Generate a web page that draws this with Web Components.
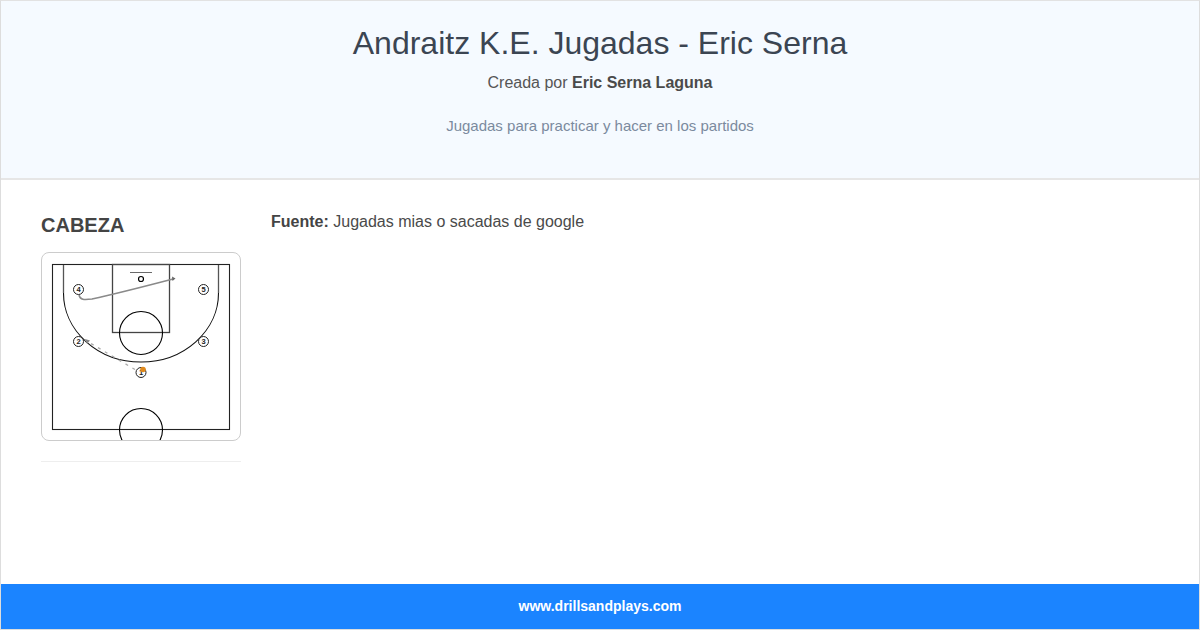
<!DOCTYPE html>
<html lang="es"><head><meta charset="utf-8"><title>Andraitz K.E. Jugadas</title>
<style>
html,body{margin:0;padding:0;background:#fff}
body{font-family:"Liberation Sans",Arial,sans-serif}
</style></head><body>
<playbook-page>
  <playbook-header slot="header" title-text="Andraitz K.E. Jugadas - Eric Serna" author="Eric Serna Laguna" description="Jugadas para practicar y hacer en los partidos"></playbook-header>
  <play-card slot="side" name="CABEZA"></play-card>
  <source-note slot="main" label="Fuente:" text="Jugadas mias o sacadas de google"></source-note>
  <playbook-footer slot="footer" text="www.drillsandplays.com"></playbook-footer>
</playbook-page>
<script>
function def(name, html, init){
  customElements.define(name, class extends HTMLElement{
    connectedCallback(){
      if(this.shadowRoot) return;
      const r=this.attachShadow({mode:"open"});
      r.innerHTML=html;
      if(init) init(r,this);
    }
  });
}
def("playbook-page",`<style>
:host{display:flex;flex-direction:column;box-sizing:border-box;width:1200px;height:630px;border:1px solid #ddd;border-top-color:#e2e2e2;overflow:hidden;background:#fff}
.body{flex:1;display:flex;gap:30px;padding:30px 40px 0;min-height:0}
.side{width:200px;flex:none}.main{flex:1;min-width:0}
</style>
<slot name="header"></slot>
<div class="body"><div class="side"><slot name="side"></slot></div><div class="main"><slot name="main"></slot></div></div>
<slot name="footer"></slot>`);
def("playbook-header",`<style>
:host{display:block;box-sizing:border-box;height:179px;background:#f5faff;border-bottom:2px solid #e6e6e6;text-align:center;padding-top:24px}
h1{margin:0;font:400 32px/37px "Liberation Sans",Arial,sans-serif;color:#3b4552}
.by{margin:9px 0 0;font-size:16px;line-height:24px;color:#555}
.by b{font-weight:700;color:#4a4a4a}
.d{margin:21px 0 0;font-size:15px;line-height:20px;color:#7b8a9e}
</style><h1></h1><p class="by">Creada por <b></b></p><p class="d"></p>`,(r,h)=>{
  r.querySelector("h1").textContent=h.getAttribute("title-text");
  r.querySelector("b").textContent=h.getAttribute("author");
  r.querySelector(".d").textContent=h.getAttribute("description");
});
def("play-card",`<style>
:host{display:block;padding-bottom:20px;border-bottom:1px solid #eee}
h2{margin:3px 0 15px;font:700 20px/24px "Liberation Sans",Arial,sans-serif;color:#444}
.frame{box-sizing:border-box;height:189px;border:1px solid #ccc;border-radius:8px;overflow:hidden;background:#fff}
svg{display:block;width:198px;height:187px}
text{font:700 7.500px "Liberation Sans",Arial,sans-serif;fill:#222;text-anchor:middle}
</style><h2></h2><div class="frame">
<svg viewBox="42 253 198 187" fill="none" stroke="#000" stroke-width="1.100">
  <rect x="52.500" y="264.500" width="177" height="165" stroke="#222"/>
  <path d="M63.500 293A77.500 69 0 0 0 218.500 293" stroke="#111"/>
  <path d="M63.500 265V293M218.500 265V293" stroke="#555" stroke-width="1.300"/>
  <rect x="112.500" y="264.500" width="57" height="68" stroke="#444" stroke-width="1.300"/>
  <path d="M130 272.500H152" stroke="#444" stroke-width=".8"/>
  <circle cx="141" cy="279" r="2.500" stroke-width="1.200"/>
  <circle cx="141" cy="333" r="21.500"/>
  <circle cx="141" cy="430" r="21.500"/>
  <path d="M79 295C80 300 84 300 92 299C115 294 150 285 173 279" stroke="#8a8a8a" stroke-width="1.500"/>
  <path d="M172 276.500L175.500 278.500L172.500 281Z" fill="#666" stroke="none"/>
  <path d="M135 369.500L85 340" stroke="#aaa" stroke-width="1.300" stroke-dasharray="3 5"/>
  <path d="M85 339L90 340.500L87 344Z" fill="#888" stroke="none"/>
  <g fill="#fff" stroke="#222" stroke-width="1">
    <circle cx="78.500" cy="289.500" r="5"/><circle cx="203.500" cy="289.500" r="5"/>
    <circle cx="78.500" cy="341.500" r="5"/><circle cx="203.500" cy="341.500" r="5"/>
    <circle cx="141" cy="372.500" r="5"/>
  </g>
  <g stroke="none">
    <text x="78.500" y="292.200">4</text><text x="203.500" y="292.200">5</text>
    <text x="78.500" y="344.200">2</text><text x="203.500" y="344.200">3</text>
    <text x="141" y="375.200">1</text>
  </g>
  <circle cx="143" cy="369.500" r="2.800" fill="#e08a1e" stroke="none"/>
</svg></div>`,(r,h)=>{r.querySelector("h2").textContent=h.getAttribute("name")});
def("source-note",`<style>
:host{display:block;font-size:16px;line-height:24px;color:#4a4a4a}
b{font-weight:700;color:#444}
</style><b></b> <span></span>`,(r,h)=>{
  r.querySelector("b").textContent=h.getAttribute("label");
  r.querySelector("span").textContent=h.getAttribute("text");
});
def("playbook-footer",`<style>
:host{display:block;height:45px;background:#1b84ff;color:#fff;text-align:center;font:700 14px/45px "Liberation Sans",Arial,sans-serif}
</style><span></span>`,(r,h)=>{r.querySelector("span").textContent=h.getAttribute("text")});
</script></body></html>
